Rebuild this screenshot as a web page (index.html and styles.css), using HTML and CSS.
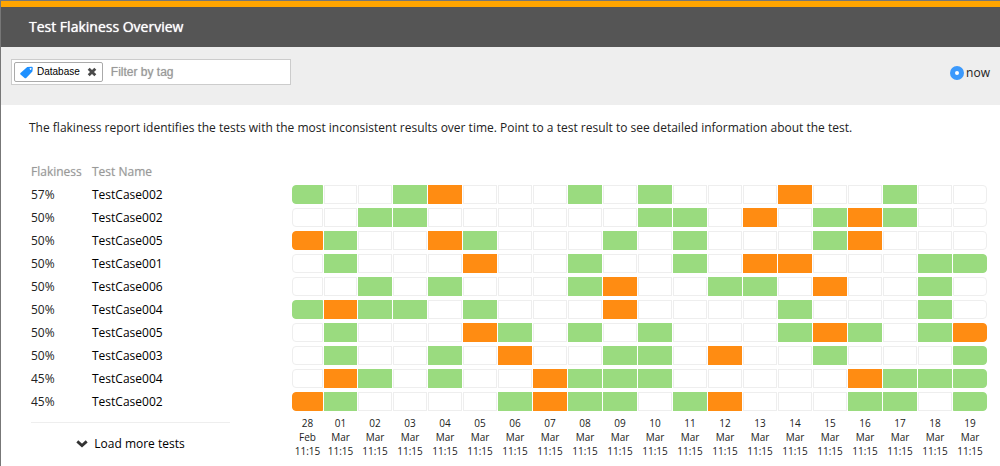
FILE: index.html
```html
<!DOCTYPE html>
<html lang="en">
<head>
<meta charset="utf-8">
<title>Test Flakiness Overview</title>
<link rel="stylesheet" href="styles.css">
</head>
<body>
<div class="frame">
<header class="header"><h1 class="title">Test Flakiness Overview</h1></header>
<form class="toolbar">
<div class="filter">
<span class="tag">
<svg class="tag-icon" width="13" height="13" viewBox="0 0 13 13" aria-hidden="true"><path fill="#1e90ff" fill-rule="evenodd" d="M7.2 1 11.6.7q1.2 0 1.2 1.2L12.4 5.6 6.2 11.9q-.8.7-1.6 0L.5 8.4q-.7-.7 0-1.5zM10.6 1.9a.9.9 0 1 0 .01 0z"/></svg>
<span>Database</span>
<button class="tag-remove" type="button" aria-label="Remove Database"><svg width="10" height="10" viewBox="0 0 10 10" aria-hidden="true"><path d="M1.7 1.7 8.3 8.3M8.3 1.7 1.7 8.3" stroke="#4a4a4a" stroke-width="2.8"/></svg></button>
</span>
<input class="filter-input" type="text" placeholder="Filter by tag" aria-label="Filter by tag">
</div>
<label class="now"><input class="now-radio" type="radio" name="time" checked>now</label>
</form>
<main class="content">
<p class="intro">The flakiness report identifies the tests with the most inconsistent results over time. Point to a test result to see detailed information about the test.</p>
<table class="report">
<colgroup><col class="col-rate"><col class="col-name"><col class="col-first"><col class="col-second"><col span="18"></colgroup>
<thead><tr><th scope="col">Flakiness</th><th scope="col">Test Name</th><td colspan="20"></td></tr></thead>
<tbody>
<tr><td class="rate">57%</td><th scope="row">TestCase002</th><td class="r pass"></td><td class="r"></td><td class="r"></td><td class="r pass"></td><td class="r fail"></td><td class="r"></td><td class="r"></td><td class="r"></td><td class="r pass"></td><td class="r"></td><td class="r pass"></td><td class="r"></td><td class="r"></td><td class="r"></td><td class="r fail"></td><td class="r"></td><td class="r"></td><td class="r pass"></td><td class="r"></td><td class="r"></td></tr>
<tr><td class="rate">50%</td><th scope="row">TestCase002</th><td class="r"></td><td class="r"></td><td class="r pass"></td><td class="r pass"></td><td class="r"></td><td class="r"></td><td class="r"></td><td class="r"></td><td class="r"></td><td class="r"></td><td class="r pass"></td><td class="r pass"></td><td class="r"></td><td class="r fail"></td><td class="r"></td><td class="r pass"></td><td class="r fail"></td><td class="r pass"></td><td class="r"></td><td class="r"></td></tr>
<tr><td class="rate">50%</td><th scope="row">TestCase005</th><td class="r fail"></td><td class="r pass"></td><td class="r"></td><td class="r"></td><td class="r fail"></td><td class="r pass"></td><td class="r"></td><td class="r"></td><td class="r"></td><td class="r pass"></td><td class="r"></td><td class="r pass"></td><td class="r"></td><td class="r"></td><td class="r"></td><td class="r pass"></td><td class="r fail"></td><td class="r"></td><td class="r"></td><td class="r"></td></tr>
<tr><td class="rate">50%</td><th scope="row">TestCase001</th><td class="r"></td><td class="r pass"></td><td class="r"></td><td class="r"></td><td class="r"></td><td class="r fail"></td><td class="r"></td><td class="r"></td><td class="r pass"></td><td class="r"></td><td class="r"></td><td class="r pass"></td><td class="r"></td><td class="r fail"></td><td class="r fail"></td><td class="r"></td><td class="r"></td><td class="r"></td><td class="r pass"></td><td class="r pass"></td></tr>
<tr><td class="rate">50%</td><th scope="row">TestCase006</th><td class="r"></td><td class="r"></td><td class="r pass"></td><td class="r"></td><td class="r pass"></td><td class="r"></td><td class="r"></td><td class="r"></td><td class="r pass"></td><td class="r fail"></td><td class="r"></td><td class="r"></td><td class="r pass"></td><td class="r pass"></td><td class="r"></td><td class="r fail"></td><td class="r"></td><td class="r"></td><td class="r pass"></td><td class="r"></td></tr>
<tr><td class="rate">50%</td><th scope="row">TestCase004</th><td class="r pass"></td><td class="r fail"></td><td class="r pass"></td><td class="r pass"></td><td class="r"></td><td class="r pass"></td><td class="r"></td><td class="r"></td><td class="r"></td><td class="r fail"></td><td class="r"></td><td class="r"></td><td class="r"></td><td class="r"></td><td class="r pass"></td><td class="r"></td><td class="r"></td><td class="r"></td><td class="r pass"></td><td class="r"></td></tr>
<tr><td class="rate">50%</td><th scope="row">TestCase005</th><td class="r"></td><td class="r pass"></td><td class="r"></td><td class="r"></td><td class="r"></td><td class="r fail"></td><td class="r pass"></td><td class="r"></td><td class="r pass"></td><td class="r"></td><td class="r pass"></td><td class="r"></td><td class="r"></td><td class="r"></td><td class="r pass"></td><td class="r fail"></td><td class="r pass"></td><td class="r"></td><td class="r pass"></td><td class="r fail"></td></tr>
<tr><td class="rate">50%</td><th scope="row">TestCase003</th><td class="r"></td><td class="r pass"></td><td class="r"></td><td class="r"></td><td class="r pass"></td><td class="r"></td><td class="r fail"></td><td class="r"></td><td class="r"></td><td class="r pass"></td><td class="r pass"></td><td class="r"></td><td class="r fail"></td><td class="r"></td><td class="r"></td><td class="r pass"></td><td class="r"></td><td class="r"></td><td class="r"></td><td class="r pass"></td></tr>
<tr><td class="rate">45%</td><th scope="row">TestCase004</th><td class="r"></td><td class="r fail"></td><td class="r pass"></td><td class="r"></td><td class="r pass"></td><td class="r"></td><td class="r"></td><td class="r fail"></td><td class="r pass"></td><td class="r pass"></td><td class="r pass"></td><td class="r"></td><td class="r"></td><td class="r"></td><td class="r"></td><td class="r"></td><td class="r fail"></td><td class="r pass"></td><td class="r pass"></td><td class="r pass"></td></tr>
<tr><td class="rate">45%</td><th scope="row">TestCase002</th><td class="r fail"></td><td class="r pass"></td><td class="r"></td><td class="r"></td><td class="r"></td><td class="r"></td><td class="r pass"></td><td class="r fail"></td><td class="r pass"></td><td class="r pass"></td><td class="r"></td><td class="r pass"></td><td class="r fail"></td><td class="r"></td><td class="r"></td><td class="r"></td><td class="r pass"></td><td class="r pass"></td><td class="r"></td><td class="r pass"></td></tr>
</tbody>
<tfoot><tr>
<td class="more-cell" colspan="2"><div class="more"><button class="more-button" type="button"><svg width="12" height="8" viewBox="0 0 12 8" aria-hidden="true"><path d="M1.3 1.4 6 5.6 10.7 1.4" fill="none" stroke="#333" stroke-width="2.8"/></svg>Load more tests</button></div></td>
<td class="date">28<br>Feb<br>11:15</td><td class="date">01<br>Mar<br>11:15</td><td class="date">02<br>Mar<br>11:15</td><td class="date">03<br>Mar<br>11:15</td><td class="date">04<br>Mar<br>11:15</td><td class="date">05<br>Mar<br>11:15</td><td class="date">06<br>Mar<br>11:15</td><td class="date">07<br>Mar<br>11:15</td><td class="date">08<br>Mar<br>11:15</td><td class="date">09<br>Mar<br>11:15</td><td class="date">10<br>Mar<br>11:15</td><td class="date">11<br>Mar<br>11:15</td><td class="date">12<br>Mar<br>11:15</td><td class="date">13<br>Mar<br>11:15</td><td class="date">14<br>Mar<br>11:15</td><td class="date">15<br>Mar<br>11:15</td><td class="date">16<br>Mar<br>11:15</td><td class="date">17<br>Mar<br>11:15</td><td class="date">18<br>Mar<br>11:15</td><td class="date">19<br>Mar<br>11:15</td>
</tr></tfoot>
</table>
</main>
</div>
</body>
</html>
```
FILE: styles.css
```css
* { box-sizing: border-box; }
body {
  margin: 0;
  background: #fff;
  color: #222;
  font: 12px/18px "Open Sans", "Noto Sans", sans-serif;
}
.frame {
  min-height: 100vh;
  border-top: 1px solid #777;
  border-left: 1px solid #777;
}
.header {
  padding: 10px 28px;
  border-top: 6px solid #ffa500;
  background: #555;
}
.title {
  margin: 0;
  color: #fff;
  font-size: 14px;
  font-weight: 400;
  line-height: 20px;
  text-shadow: 0 0 1px #fff;
}
.toolbar {
  display: flex;
  align-items: flex-start;
  justify-content: space-between;
  padding: 12px 10px 20px;
  background: #eee;
}
.filter {
  display: flex;
  align-items: center;
  gap: 8px;
  width: 280px;
  height: 26px;
  padding: 0 2px;
  border: 1px solid #ccc;
  background: #fff;
}
.tag {
  display: flex;
  flex: none;
  align-items: center;
  height: 20px;
  padding: 0 5px;
  border: 1px solid #aaa;
  border-radius: 2px;
  color: #000;
  font: 10px/18px "Liberation Sans", Arial, sans-serif;
}
.tag-icon { margin-right: 4px; }
.tag-remove {
  display: flex;
  margin-left: 7px;
  padding: 0;
  border: 0;
  background: none;
}
.filter-input {
  flex: 1;
  min-width: 0;
  padding: 0;
  border: 0;
  outline: 0;
  font: 12px/18px "Liberation Sans", Arial, sans-serif;
}
.filter-input::placeholder {
  color: #999;
  text-shadow: 0 0 1px #bbb;
}
.now {
  display: flex;
  align-items: center;
  gap: 2px;
  padding-top: 5px;
}
.now-radio {
  appearance: none;
  width: 14px;
  height: 14px;
  margin: 0;
  border: 5px solid #3b99fc;
  border-radius: 50%;
  background: #fff;
}
.content { padding: 14px 12px 0 28px; }
.intro { margin: 0 0 21px; }
.report {
  width: 100%;
  padding-left: 1px;
  table-layout: fixed;
  border-spacing: 1px 4px;
}
.col-rate { width: 60px; }
.col-name { width: 199px; }
.col-first { width: 31px; }
.col-second { width: 33px; }
.report th,
.report td {
  height: 19px;
  padding: 0;
  font-weight: 400;
  text-align: left;
}
.report thead th {
  color: #999;
  text-shadow: 0 0 1px #ccc;
}
.report tbody th { color: #000; }
.report .r { border: 1px solid #eee; }
.report .pass { border-color: #9adb7f; background: #9adb7f; }
.report .fail { border-color: #ff8c12; background: #ff8c12; }
.r:nth-child(3) { border-radius: 4px 0 0 4px; }
.r:last-child { border-radius: 0 4px 4px 0; }
.report .date {
  padding-top: 1px;
  font-size: 10px;
  line-height: 14px;
  text-align: center;
  vertical-align: top;
}
.report .more-cell {
  padding: 7px 61px 0 0;
  vertical-align: top;
}
.more {
  display: flex;
  justify-content: center;
  padding-top: 12px;
  border-top: 1px solid #eee;
}
.more-button {
  display: flex;
  align-items: center;
  gap: 6px;
  padding: 0;
  border: 0;
  background: none;
  color: #000;
  font: inherit;
}
```
